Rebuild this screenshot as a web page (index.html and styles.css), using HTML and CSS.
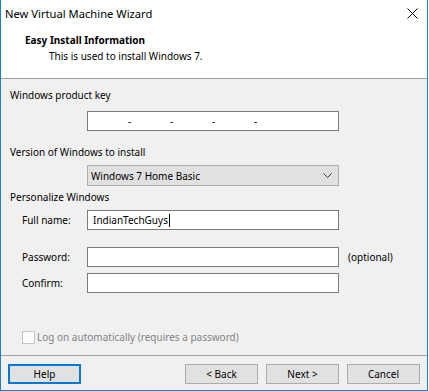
FILE: index.html
```html
<!DOCTYPE html>
<html lang="en">
<head>
    <meta charset="UTF-8">
    <title>New Virtual Machine Wizard</title>
    <link rel="stylesheet" href="styles.css">
</head>
<body>
    <div class="window">
        <div class="titlebar">
            <span class="title">New Virtual Machine Wizard</span>
            <svg class="close" width="11" height="11" viewBox="0 0 11 11">
                <path d="M0.5 0.5 L10.5 10.5 M10.5 0.5 L0.5 10.5" stroke="#000" stroke-width="1" fill="none"/>
            </svg>
        </div>

        <div class="header">
            <div class="header-title">Easy Install Information</div>
            <div class="header-sub">This is used to install Windows 7.</div>
        </div>

        <div class="content">
            <div class="section-label first">Windows product key</div>
            <div class="control-row key-row">
                <div class="textbox key">
                    <span>-</span><span>-</span><span>-</span><span>-</span>
                </div>
            </div>

            <div class="section-label version">Version of Windows to install</div>
            <div class="control-row select-row">
                <div class="select">
                    <span>Windows 7 Home Basic</span>
                    <svg class="chevron" width="9" height="5" viewBox="0 0 9 5">
                        <path d="M0.5 0.5 L4.5 4.5 L8.5 0.5" stroke="#333" stroke-width="1" fill="none"/>
                    </svg>
                </div>
            </div>

            <div class="section-label personalize">Personalize Windows</div>
            <div class="form-grid">
                <label class="field-label">Full name:</label>
                <div class="textbox"><span class="typed">IndianTechGuys</span><span class="caret"></span></div>
                <span></span>

                <label class="field-label pw">Password:</label>
                <div class="textbox pw"></div>
                <span class="hint pw">(optional)</span>

                <label class="field-label">Confirm:</label>
                <div class="textbox"></div>
                <span></span>
            </div>

            <div class="autologon">
                <span class="checkbox"></span>
                <span>Log on automatically (requires a password)</span>
            </div>
        </div>

        <div class="footer">
            <button class="btn default">Help</button>
            <div class="spacer"></div>
            <button class="btn">&lt; Back</button>
            <button class="btn">Next &gt;</button>
            <button class="btn">Cancel</button>
        </div>
    </div>
</body>
</html>
```

FILE: styles.css
```css
* {
    box-sizing: border-box;
}

body {
    margin: 0;
    font-family: "Noto Sans", "Liberation Sans", sans-serif;
    font-size: 10px;
    color: #000;
    background-color: #fff;
}

.window {
    width: 428px;
    height: 391px;
    border: 1px solid #1b7fd3;
    border-top: none;
    display: flex;
    flex-direction: column;
    background-color: #f0f0f0;
}

/* Barre de titre */
.titlebar {
    height: 26px;
    background-color: #fff;
    display: flex;
    align-items: center;
    padding-left: 4px;
    padding-right: 9px;
}

.title {
    flex: 1;
    font-size: 11.2px;
}

.close {
    margin-top: 1px;
}

/* En-tête blanc */
.header {
    background-color: #fff;
    height: 53px;
    padding: 7px 0 0 24px;
    border-bottom: 1px solid #a0a0a0;
}

.header-title {
    font-weight: bold;
    line-height: 14px;
}

.header-sub {
    line-height: 14px;
    margin-top: 2px;
    padding-left: 24px;
}

/* Contenu */
.content {
    flex: 1;
    padding-left: 9px;
}

.section-label {
    line-height: 16px;
}

.section-label.first {
    margin-top: 8px;
}

.section-label.version {
    margin-top: 13px;
}

.section-label.personalize {
    margin-top: 3px;
}

.control-row {
    padding-left: 77px;
}

.key-row {
    margin-top: 8px;
}

.select-row {
    margin-top: 5px;
}

.textbox {
    width: 252px;
    height: 20px;
    background-color: #fff;
    border: 1px solid #7a7a7a;
    display: flex;
    align-items: center;
    padding-left: 5px;
}

.textbox.key {
    padding-left: 40px;
}

.textbox.key span {
    width: 42px;
}

.caret {
    width: 1px;
    height: 13px;
    background-color: #000;
    margin-left: 1px;
}

.select {
    width: 252px;
    height: 21px;
    background-color: #e1e1e1;
    border: 1px solid #adadad;
    display: flex;
    align-items: center;
    justify-content: space-between;
    padding: 0 6px 0 3px;
}

.form-grid {
    display: grid;
    grid-template-columns: 77px 252px auto;
    grid-template-rows: 20px 31px 20px;
    row-gap: 6px;
    align-items: center;
    margin-top: 5px;
}

.field-label {
    padding-left: 12px;
}

/* La ligne du mot de passe est décalée vers le bas */
.form-grid .pw {
    align-self: end;
    line-height: 20px;
}

.hint {
    padding-left: 9px;
}

.autologon {
    display: flex;
    align-items: center;
    margin-top: 36px;
    padding-left: 12px;
    color: #838383;
    line-height: 16px;
}

.checkbox {
    width: 13px;
    height: 13px;
    border: 1px solid #c4c4c4;
    background-color: #fcfcfc;
    margin-right: 2px;
}

/* Pied de page avec boutons */
.footer {
    height: 35px;
    border-top: 1px solid #a0a0a0;
    display: flex;
    align-items: flex-start;
    padding: 8px 7px 0 7px;
    gap: 8px;
}

.spacer {
    flex: 1;
}

.btn {
    width: 73px;
    height: 20px;
    font-family: inherit;
    font-size: 10px;
    color: #000;
    background-color: #e1e1e1;
    border: 1px solid #adadad;
    padding: 0;
}

.btn.default {
    border: 2px solid #0078d7;
}
```
